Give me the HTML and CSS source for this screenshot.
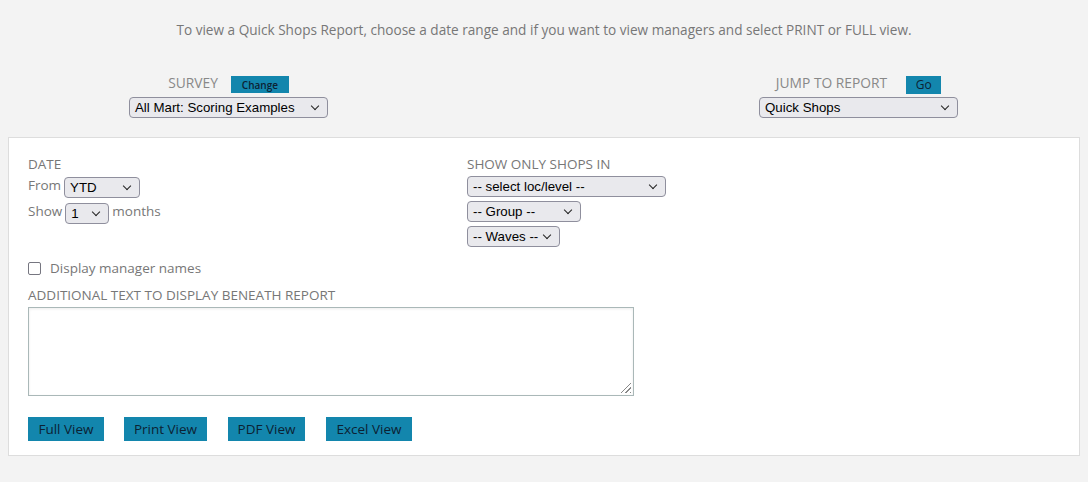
FILE: index.html
```html
<!DOCTYPE html>
<html lang="en">
<head>
    <meta charset="UTF-8">
    <title>Quick Shops Report</title>
    <link rel="stylesheet" href="styles.css">
</head>
<body>
    <p class="intro">To view a Quick Shops Report, choose a date range and if you want to view managers and select PRINT or FULL view.</p>

    <div class="picker-row">
        <div class="picker">
            <div class="picker-head">
                <span class="caption">Survey</span>
                <button class="btn btn-small">Change</button>
            </div>
            <div class="select wide">All Mart: Scoring Examples</div>
        </div>
        <div class="picker picker-jump">
            <div class="picker-head">
                <span class="caption">Jump to Report</span>
                <button class="btn btn-go">Go</button>
            </div>
            <div class="select wide">Quick Shops</div>
        </div>
    </div>

    <div class="panel">
        <div class="columns">
            <div class="col-left">
                <div class="label">Date</div>
                <div class="line">From <div class="select s-ytd">YTD</div></div>
                <div class="line">Show <div class="select s-num">1</div> months</div>
            </div>
            <div class="col-right">
                <div class="label">Show only shops in</div>
                <div class="select wide">-- select loc/level --</div>
                <div class="select s-group">-- Group --</div>
                <div class="select s-waves">-- Waves --</div>
            </div>
        </div>

        <label class="check"><span class="box"></span>Display manager names</label>

        <div class="label">Additional text to display beneath report</div>
        <div class="textarea"><span class="grip"></span></div>

        <div class="actions">
            <button class="btn btn-view v-full">Full View</button>
            <button class="btn btn-view v-print">Print View</button>
            <button class="btn btn-view v-pdf">PDF View</button>
            <button class="btn btn-view v-excel">Excel View</button>
        </div>
    </div>
</body>
</html>
```

FILE: styles.css
```css
body {
    margin: 0;
    background-color: #f3f3f3;
    font-family: 'Open Sans', sans-serif;
    font-size: 13.5px;
    color: #777;
}
.intro {
    margin: 0;
    padding-top: 20px;
    height: 40px;
    text-align: center;
    line-height: 20px;
    font-size: 13.6px;
}
.picker-row {
    display: flex;
    justify-content: space-between;
    padding: 12px 9px 0 8px;
    height: 65px;
}
.picker {
    width: 441px;
    display: flex;
    flex-direction: column;
    align-items: center;
}
.picker-head {
    display: flex;
    align-items: center;
    gap: 13px;
    height: 21px;
}
.picker-head .caption {
    text-transform: uppercase;
    font-size: 13.8px;
    color: #888;
}
.picker-jump .picker-head {
    gap: 19px;
}
.btn {
    border: none;
    background-color: #1386ad;
    color: #0c2233;
    font-family: 'Open Sans', sans-serif;
    padding: 0;
    cursor: pointer;
}
.btn-small {
    width: 58px;
    height: 17px;
    font-size: 10px;
    font-weight: 600;
    margin-top: 4px;
}
.btn-go {
    width: 35px;
    height: 18px;
    font-size: 12px;
    margin-top: 4px;
}
.select {
    position: relative;
    box-sizing: border-box;
    height: 21px;
    border: 1px solid #8f8f9d;
    border-radius: 4px;
    background-color: #e9e9ed;
    font-family: 'Liberation Sans', Arial, sans-serif;
    font-size: 13.3px;
    color: #000;
    line-height: 19px;
    padding-left: 5px;
    margin-top: 4px;
}
.select::after {
    content: '';
    position: absolute;
    right: 9px;
    top: 5px;
    width: 5px;
    height: 5px;
    border-right: 1.5px solid #222;
    border-bottom: 1.5px solid #222;
    transform: rotate(45deg);
}
.wide { width: 199px; }
.s-ytd { width: 76px; margin: 0; }
.s-num { width: 44px; margin: 0; }
.s-group { width: 114px; }
.s-waves { width: 93px; }

.panel {
    margin: 0 8px;
    background-color: #fff;
    border: 1px solid #ddd;
    padding: 18px 19px 14px 19px;
}
.columns {
    display: flex;
}
.col-left {
    width: 439px;
}
.label {
    text-transform: uppercase;
    line-height: 16px;
}
.line {
    display: flex;
    gap: 3px;
    margin-top: 5px;
    line-height: 16px;
}
.check {
    display: flex;
    align-items: center;
    margin-top: 12px;
    gap: 9px;
    line-height: 18px;
}
.box {
    box-sizing: border-box;
    width: 13px;
    height: 13px;
    border: 1.5px solid #767680;
    border-radius: 2px;
    background: #fff;
}
.check + .label {
    margin-top: 10px;
}
.textarea {
    position: relative;
    box-sizing: border-box;
    width: 606px;
    height: 89px;
    margin-top: 4px;
    border: 1px solid #aab8b8;
    box-shadow: inset 0 1px 3px rgba(0, 0, 0, 0.08);
}
.grip {
    position: absolute;
    right: 2px;
    bottom: 2px;
    width: 13px;
    height: 13px;
    background: repeating-linear-gradient(135deg, transparent 0 2px, #888 2px 3px);
    clip-path: polygon(100% 0, 100% 100%, 0 100%);
}
.actions {
    display: flex;
    gap: 20px;
    margin-top: 21px;
}
.btn-view {
    height: 24px;
    font-size: 13.5px;
}
.v-full { width: 76px; }
.v-print { width: 83px; }
.v-pdf { width: 77px; margin-left: 1px; }
.v-excel { width: 86px; margin-left: 1px; }
```
